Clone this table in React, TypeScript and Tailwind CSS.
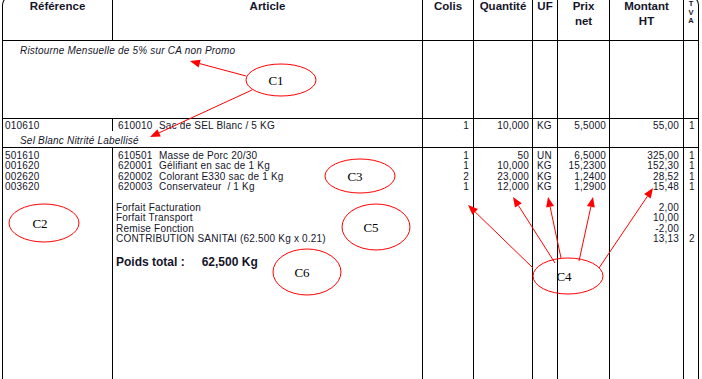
import React from 'react';

const ITEMS = [
  { ref: '501610', code: '610501', label: 'Masse de Porc 20/30', colis: '1', qte: '50', uf: 'UN', prix: '6,5000', montant: '325,00', tva: '1' },
  { ref: '001620', code: '620001', label: 'Gélifiant en sac de 1 Kg', colis: '1', qte: '10,000', uf: 'KG', prix: '15,2300', montant: '152,30', tva: '1' },
  { ref: '002620', code: '620002', label: 'Colorant E330 sac de 1 Kg', colis: '2', qte: '23,000', uf: 'KG', prix: '1,2400', montant: '28,52', tva: '1' },
  { ref: '003620', code: '620003', label: 'Conservateur  / 1 Kg', colis: '1', qte: '12,000', uf: 'KG', prix: '1,2900', montant: '15,48', tva: '1' },
];

const EXTRAS = [
  { label: 'Forfait Facturation', montant: '2,00', tva: '' },
  { label: 'Forfait Transport', montant: '10,00', tva: '' },
  { label: 'Remise Fonction', montant: '-2,00', tva: '' },
  { label: 'CONTRIBUTION SANITAI (62.500 Kg x 0.21)', montant: '13,13', tva: '2' },
];

const cell = 'border-r border-black';
const body = 'text-[10px] tracking-[0.2px] leading-[10.4px]';
const line = 'h-[10.4px] leading-[10.4px] whitespace-pre';

function Lines({ values, align = 'right' }: { values: string[]; align?: 'left' | 'right' }) {
  return (
    <>
      {values.map((v, i) => (
        <div key={i} className={`${line} ${align === 'right' ? 'text-right' : 'text-left'}`}>
          {v}
        </div>
      ))}
    </>
  );
}

type Pt = { x1: number; y1: number; x2: number; y2: number };

function Arrow({ x1, y1, x2, y2 }: Pt) {
  const a = Math.atan2(y2 - y1, x2 - x1);
  const len = 10;
  const w = 4;
  const bx = x2 - len * Math.cos(a);
  const by = y2 - len * Math.sin(a);
  const pts = [
    `${x2},${y2}`,
    `${bx - w * Math.sin(a)},${by + w * Math.cos(a)}`,
    `${bx + w * Math.sin(a)},${by - w * Math.cos(a)}`,
  ].join(' ');
  return (
    <g>
      <line x1={x1} y1={y1} x2={bx} y2={by} stroke="#ff0000" strokeWidth="1" />
      <polygon points={pts} fill="#ff0000" />
    </g>
  );
}

const BUBBLES = [
  { label: 'C1', cx: 281, cy: 80, rx: 35, ry: 16, tx: 276 },
  { label: 'C2', cx: 44, cy: 223, rx: 35, ry: 19, tx: 40 },
  { label: 'C3', cx: 360, cy: 176, rx: 35, ry: 17, tx: 355 },
  { label: 'C5', cx: 376, cy: 227, rx: 34, ry: 23, tx: 371 },
  { label: 'C6', cx: 307, cy: 272, rx: 34, ry: 23, tx: 302 },
  { label: 'C4', cx: 568, cy: 276, rx: 35, ry: 18, tx: 564 },
];

const ARROWS: Pt[] = [
  { x1: 246, y1: 76, x2: 190, y2: 61 },
  { x1: 252, y1: 90, x2: 150, y2: 137 },
  { x1: 533, y1: 268, x2: 468, y2: 205 },
  { x1: 555, y1: 263, x2: 513, y2: 197 },
  { x1: 561, y1: 258, x2: 548, y2: 197 },
  { x1: 579, y1: 261, x2: 593, y2: 197 },
  { x1: 599, y1: 268, x2: 653, y2: 188 },
];

function Annotations() {
  return (
    <svg className="absolute inset-0 pointer-events-none" width="702" height="379" viewBox="0 0 702 379">
      {ARROWS.map((a, i) => (
        <Arrow key={i} {...a} />
      ))}
      {BUBBLES.map((b) => (
        <g key={b.label}>
          <ellipse cx={b.cx} cy={b.cy} rx={b.rx} ry={b.ry} fill="none" stroke="#ff0000" strokeWidth="1" />
          <text
            x={b.tx}
            y={b.cy + 5}
            textAnchor="middle"
            fontFamily="'Liberation Serif', 'Times New Roman', serif"
            fontSize="13"
            fill="#000"
          >
            {b.label}
          </text>
        </g>
      ))}
    </svg>
  );
}

export default function App() {
  return (
    <div className="relative w-[702px] h-[379px] overflow-hidden bg-white font-['Liberation_Sans',Arial,sans-serif] text-[#15152b]">
      <div className="ml-[2px] -mt-[4px] w-[697px] border border-b-0 border-black rounded-t-[9px] grid grid-cols-[110px_310px_51px_59px_25px_52px_74px_14px] grid-rows-[44px_78px_12px_17px_240px]">
        {/* Header */}
        <div className={`${cell} border-b pt-[2px] text-center text-[11.5px] font-bold leading-[15px]`}>Référence</div>
        <div className={`${cell} border-b pt-[2px] text-center text-[11.5px] font-bold leading-[15px]`}>Article</div>
        <div className={`${cell} border-b pt-[2px] text-center text-[11.5px] font-bold leading-[15px]`}>Colis</div>
        <div className={`${cell} border-b pt-[2px] text-center text-[11.5px] font-bold leading-[15px]`}>Quantité</div>
        <div className={`${cell} border-b pt-[2px] text-center text-[11.5px] font-bold leading-[15px]`}>UF</div>
        <div className={`${cell} border-b pt-[2px] text-center text-[11.5px] font-bold leading-[15px]`}>
          Prix
          <br />
          net
        </div>
        <div className={`${cell} border-b pt-[2px] text-center text-[11.5px] font-bold leading-[15px]`}>
          Montant
          <br />
          HT
        </div>
        <div className="border-b border-black pt-[3px] flex flex-col items-center text-[7.5px] font-bold leading-[8.5px]">
          <span>T</span>
          <span>V</span>
          <span>A</span>
        </div>

        {/* Ristourne */}
        <div className={`${cell} col-span-2 border-b pl-[17px] pt-[5px] ${body} italic`}>
          Ristourne Mensuelle de 5% sur CA non Promo
        </div>
        <div className={`${cell} border-b`} />
        <div className={`${cell} border-b`} />
        <div className={`${cell} border-b`} />
        <div className={`${cell} border-b`} />
        <div className={`${cell} border-b`} />
        <div className="border-b border-black" />

        {/* Sac de SEL */}
        <div className={`${cell} pl-[2px] pt-[2px] ${body}`}>010610</div>
        <div className={`${cell} pl-[5px] pt-[2px] ${body} whitespace-nowrap`}>
          <span className="inline-block w-[41px]">610010</span>Sac de SEL Blanc / 5 KG
        </div>
        <div className={`${cell} row-span-2 border-b pr-[4px] pt-[2px] text-right ${body}`}>1</div>
        <div className={`${cell} row-span-2 border-b pr-[3px] pt-[2px] text-right ${body}`}>10,000</div>
        <div className={`${cell} row-span-2 border-b pl-[4px] pt-[2px] ${body}`}>KG</div>
        <div className={`${cell} row-span-2 border-b pr-[3px] pt-[2px] text-right ${body}`}>5,5000</div>
        <div className={`${cell} row-span-2 border-b pr-[4px] pt-[2px] text-right ${body}`}>55,00</div>
        <div className={`row-span-2 border-b border-black pl-[5px] pt-[2px] ${body}`}>1</div>
        <div className={`${cell} col-start-1 col-span-2 border-b pl-[17px] pt-[5px] ${body} italic`}>
          Sel Blanc Nitrité Labellisé
        </div>

        {/* Lignes */}
        <div className={`${cell} pl-[2px] pt-[3px] ${body}`}>
          <Lines values={ITEMS.map((r) => r.ref)} align="left" />
        </div>
        <div className={`${cell} pl-[5px] pt-[3px] ${body}`}>
          {ITEMS.map((r) => (
            <div key={r.code} className={line}>
              <span className="inline-block w-[41px]">{r.code}</span>
              {r.label}
            </div>
          ))}
          <div className="h-[10.4px]" />
          <div className="-ml-[2px]">
            <Lines values={EXTRAS.map((e) => e.label)} align="left" />
          </div>
          <div className="-ml-[2px] mt-[10px] text-[12px] tracking-normal font-bold leading-[14px] whitespace-nowrap">
            Poids total :<span className="ml-[17px]">62,500 Kg</span>
          </div>
        </div>
        <div className={`${cell} pr-[4px] pt-[3px] ${body}`}>
          <Lines values={ITEMS.map((r) => r.colis)} />
        </div>
        <div className={`${cell} pr-[3px] pt-[3px] ${body}`}>
          <Lines values={ITEMS.map((r) => r.qte)} />
        </div>
        <div className={`${cell} pl-[4px] pt-[3px] ${body}`}>
          <Lines values={ITEMS.map((r) => r.uf)} align="left" />
        </div>
        <div className={`${cell} pr-[3px] pt-[3px] ${body}`}>
          <Lines values={ITEMS.map((r) => r.prix)} />
        </div>
        <div className={`${cell} pr-[4px] pt-[3px] ${body}`}>
          <Lines values={[...ITEMS.map((r) => r.montant), '', ...EXTRAS.map((e) => e.montant)]} />
        </div>
        <div className={`pl-[5px] pt-[3px] ${body}`}>
          <Lines values={[...ITEMS.map((r) => r.tva), '', ...EXTRAS.map((e) => e.tva)]} align="left" />
        </div>
      </div>
      <Annotations />
    </div>
  );
}
